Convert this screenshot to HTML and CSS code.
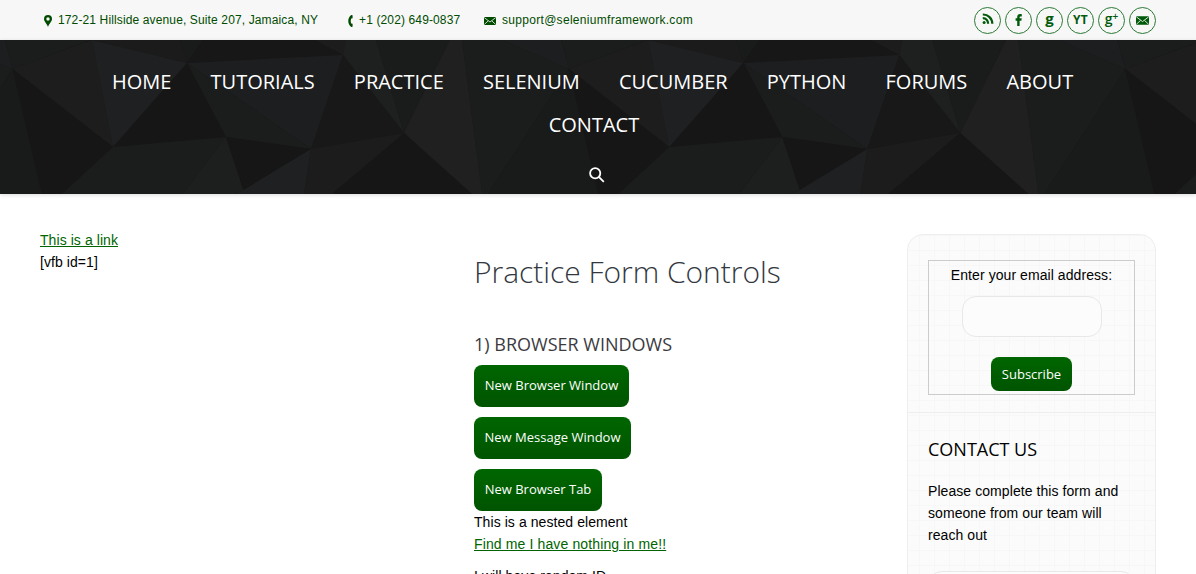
FILE: index.html
```html
<!DOCTYPE html>
<html lang="en">
<head>
<meta charset="utf-8">
<title>Practice Form Controls</title>
<link rel="stylesheet" href="styles.css">
</head>
<body>
<div class="topbar">
  <div class="contacts">
    <span class="contact address"><svg class="pin" width="8" height="12" viewBox="0 0 8 12"><path fill-rule="evenodd" d="M4 0a4 4 0 0 1 4 4c0 2.600-2.600 4-4 8C2.600 8 0 6.600 0 4a4 4 0 0 1 4-4zm0 2.300a1.700 1.700 0 1 0 0 3.400 1.700 1.700 0 0 0 0-3.400z"/></svg><span>172-21 Hillside avenue, Suite 207, Jamaica, NY</span></span>
    <span class="contact phone"><svg width="5" height="12" viewBox="0 0 5 12"><path d="M3.200 0 4.600.2v3L3.200 3.500c-.6 1.600-.6 3.600 0 5l1.400.3v3L3.200 12C-.7 9-.7 3 3.200 0z"/></svg><span>+1 (202) 649-0837</span></span>
    <span class="contact mail"><svg class="env" width="12" height="8" viewBox="0 0 12 8"><rect width="12" height="8" rx=".5"/><path class="fold" d="M.3.6 6 5 11.700.6M.3 7.500 4.200 3.900M11.700 7.500 7.800 3.900"/></svg><span>support@seleniumframework.com</span></span>
  </div>
  <div class="social">
    <a><svg class="rss" width="12" height="12" viewBox="0 0 12 12"><circle cx="2.100" cy="9.600" r="1.500"/><path class="wave" d="M.8 5.200a5.300 5.300 0 0 1 5.300 5.600M.8 1.500a9.200 9.200 0 0 1 9.500 9.300"/></svg></a>
    <a><svg class="fb" width="8" height="12" viewBox="0 0 8 12"><path d="M2.200 12V6.700H.6V4.300h1.600V3C2.200 1 3.300 0 5.100 0c.8 0 1.500.1 1.700.2v2.200H5.600c-.8 0-1 .4-1 1v.9h2.100l-.3 2.400H4.600V12z"/></svg></a>
    <a><span class="g">g</span></a>
    <a><span class="yt">YT</span></a>
    <a><span class="gplus">g<sup>+</sup></span></a>
    <a><svg class="env" width="13" height="9" viewBox="0 0 12 8"><rect width="12" height="8" rx=".5"/><path class="fold" d="M.3.6 6 5 11.700.6M.3 7.500 4.200 3.900M11.700 7.500 7.800 3.900"/></svg></a>
  </div>
</div>
<header class="header">
  <svg class="facets" width="1196" height="154" viewBox="0 0 1196 154">
    <defs>
      <g id="tile">
        <path fill="#1b1c1c" d="M12.700 29 5 0H90z"/>
        <path fill="#1d1d1d" d="M12.700 29 92 0 113 107z"/>
        <path fill="#1f2021" d="M92 0 187 23 113 107z"/>
        <path fill="#1b1b1b" d="M92 0H180L187 23z"/>
        <path fill="#191a1a" d="M180 0H203L187 23z"/>
        <path fill="#171717" d="M203 0H315L343 15 187 23z"/>
        <path fill="#1c1c1c" d="M315 0H346L343 15z"/>
        <path fill="#1e1f1f" d="M346 0H376L404 93 343 15z"/>
        <path fill="#1d1e1f" d="M187 23 343 15 311 109z"/>
        <path fill="#1b1c1c" d="M187 23 311 109 226 97z"/>
        <path fill="#161616" d="M187 23 226 97 113 107z"/>
        <path fill="#181818" d="M343 15 404 93 311 109z"/>
        <path fill="#1a1b1b" d="M376 0H450L404 93z"/>
        <path fill="#202020" d="M450 0H462L482 154H472L404 93z"/>
        <path fill="#1b1c1c" d="M462 0H503L569 29 488 154H482z"/>
        <path fill="#1d1e1f" d="M503 0H561L569 29z"/>
        <path fill="#191a1a" d="M569 29 598 154H488z"/>
        <path fill="#161616" d="M12.700 29 113 107 62 154H42z"/>
        <path fill="#1b1c1c" d="M113 107 226 97 183 154H62z"/>
        <path fill="#1d1e1e" d="M226 97 243.500 150 235 154H183z"/>
        <path fill="#161616" d="M226 97 311 109 243.500 150z"/>
        <path fill="#1f2021" d="M243.500 150 311 109 304 154H235z"/>
        <path fill="#1c1c1c" d="M311 109 404 93 332 154H304z"/>
        <path fill="#161616" d="M404 93 472 154H332z"/>
      </g>
    </defs>
    <use href="#tile" x="-556.300"/><use href="#tile"/><use href="#tile" x="556.300"/><use href="#tile" x="1112.600"/>
  </svg>
  <nav class="nav">
    <div class="row"><a>HOME</a><a>TUTORIALS</a><a>PRACTICE</a><a>SELENIUM</a><a>CUCUMBER</a><a>PYTHON</a><a>FORUMS</a><a>ABOUT</a></div>
    <div class="row second"><a>CONTACT</a></div>
    <svg class="search" width="16" height="16" viewBox="0 0 16 16"><circle cx="6.200" cy="6.200" r="5.100"/><path d="M9.800 9.800 14.800 14.800"/></svg>
  </nav>
</header>
<main class="main">
  <section class="left"><a class="link">This is a link</a><p>[vfb id=1]</p></section>
  <section class="center">
    <h1>Practice Form Controls</h1>
    <h3>1) BROWSER WINDOWS</h3>
    <button class="btn w1">New Browser Window</button>
    <button class="btn w2">New Message Window</button>
    <button class="btn w3">New Browser Tab</button>
    <p>This is a nested element</p>
    <a class="link find">Find me I have nothing in me!!</a>
    <p class="random">I will have random ID</p>
  </section>
  <aside class="sidebar">
    <div class="widget subscribe">
      <form class="box">
        <label>Enter your email address:</label>
        <input type="text" class="email">
        <button type="button" class="btn small">Subscribe</button>
      </form>
    </div>
    <div class="widget contact-us">
      <h3>CONTACT US</h3>
      <p>Please complete this form and someone from our team will reach out</p>
      <input type="text" class="field">
    </div>
  </aside>
</main>
</body>
</html>
```
FILE: styles.css
```css
* { box-sizing: border-box; }
html, body { height: 574px; overflow: hidden; }
body { margin: 0; background: #fff; color: #000; font: 14px/22px "Liberation Sans", Arial, sans-serif; letter-spacing: 0.07px; }
p, h1, h3 { margin: 0; font-weight: 400; }
svg { display: block; }

.topbar { height: 40px; background: #f7f7f7; padding: 0 40px; display: flex; justify-content: space-between; color: #004b00; fill: #004b00; font-size: 12px; line-height: 40px; }
.contacts { display: flex; padding-left: 4px; }
.contact { display: flex; align-items: center; white-space: nowrap; letter-spacing: 0.13px; }
.contact svg { margin-top: 2px; }
.address { width: 304px; gap: 6px; }
.phone { width: 136px; gap: 6px; }
.mail { gap: 6px; letter-spacing: 0.3px; }
.fold { fill: none; stroke: #f7f7f7; stroke-width: 0.8; }

.social { display: flex; gap: 4px; padding-top: 7px; fill: #005a0a; color: #005a0a; }
.social a { width: 27px; height: 27px; border: 1px solid #2c7a35; border-radius: 50%; display: flex; align-items: center; justify-content: center; font-family: "Open Sans", sans-serif; font-weight: 700; line-height: 25px; }
.social svg { margin-bottom: 1px; }
.social .rss { margin-bottom: 3px; }
.wave { fill: none; stroke: #005a0a; stroke-width: 2.2; }
.g { font-size: 15px; margin-top: -4px; }
.yt { font-size: 12px; letter-spacing: 0.3px; margin-top: -2px; }
.gplus { font-size: 14px; display: flex; margin-top: -4px; letter-spacing: 0; font-weight: 600; }
.gplus sup { font-size: 10px; line-height: 20px; }

.header { height: 154px; background: #191919; display: grid; box-shadow: 0 1px 4px rgba(0, 0, 0, 0.15); }
.facets, .nav { grid-area: 1 / 1; }
.nav { z-index: 1; color: #fff; font: 20px/43px "Open Sans", sans-serif; padding: 20px 0 0; letter-spacing: 0; }
.row { display: flex; gap: 39.15px; padding-left: 112px; white-space: nowrap; }
.second { padding-left: 548.7px; }
.search { margin: 21px 0 0 589px; fill: none; stroke: #fff; stroke-width: 1.8; }

.main { display: grid; grid-template-columns: 434px 433px 249px; padding: 0 40px; height: 380px; overflow: hidden; }
.left { padding-top: 35px; }
.link { color: #006400; text-decoration: underline; }
.find { letter-spacing: 0.13px; }
.center { padding-top: 57px; display: flex; flex-direction: column; align-items: flex-start; }
.center h1 { font: 300 30px/42px "Open Sans", sans-serif; color: #333740; letter-spacing: -0.03px; }
.center h3 { font: 18px/26px "Open Sans", sans-serif; color: #3b3b3f; margin: 38px 0 8px; white-space: nowrap; letter-spacing: 0; }
.btn { height: 42px; border: 0; border-radius: 8px; padding: 0 0 2px; margin: 0 0 10px; color: #fff; font: 13px/40px "Open Sans", sans-serif; letter-spacing: 0; background: linear-gradient(#006600, #005400); white-space: nowrap; }
.w1 { width: 155px; }
.w2 { width: 157px; }
.w3 { width: 128px; margin-bottom: 0; }
.random { margin-top: 10px; }

.sidebar { margin-top: 40px; height: 420px; border: 1px solid #eee; border-radius: 16px; background: linear-gradient(90deg, #f7f7f7 1px, transparent 1px) 11px 0 / 15px 15px, linear-gradient(#f7f7f7 1px, transparent 1px) 0 0 / 15px 15px, #fbfbfb; }
.widget { padding: 25px 20px 0; }
.subscribe { height: 178px; border-bottom: 1px solid #eee; }
.box { height: 135px; border: 1px solid #ccc; padding-top: 3px; display: flex; flex-direction: column; align-items: center; }
input { border: 1px solid #e8e8e8; border-radius: 14px; background: #fcfcfc; }
.email { width: 140px; height: 41px; margin: 10px 0 20px; }
.small { width: 81px; height: 34px; line-height: 32px; flex: none; margin: 0; padding: 0; }
.contact-us { padding-top: 23px; }
.contact-us h3 { font: 18px/26px "Open Sans", sans-serif; margin-bottom: 18px; letter-spacing: 0; }
.field { display: block; width: 207px; height: 41px; margin-top: 25px; }
```
